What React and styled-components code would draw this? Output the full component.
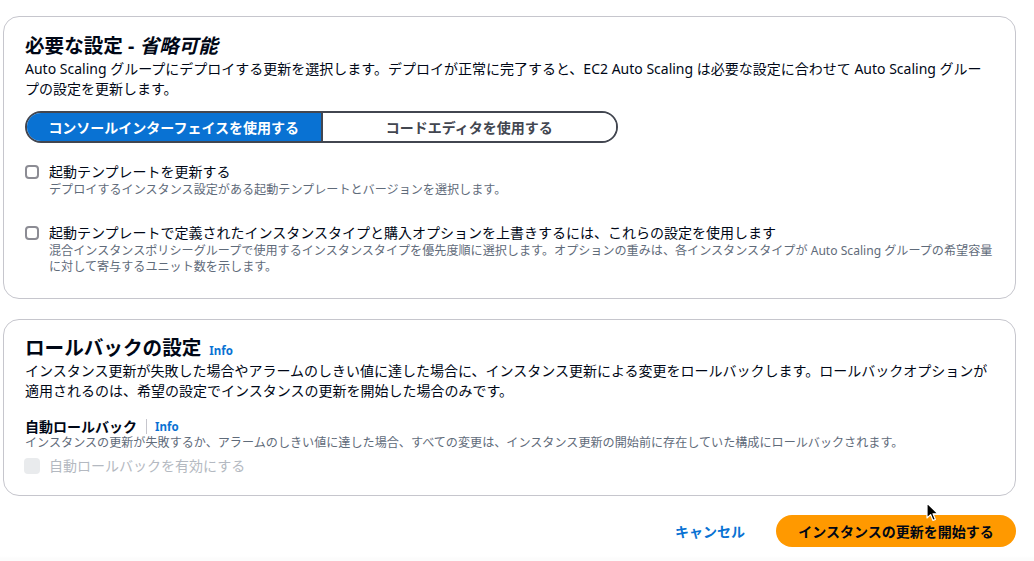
import React, { useState } from 'react';
import styled, { createGlobalStyle } from 'styled-components';

const GlobalStyle = createGlobalStyle`
  html, body {
    margin: 0;
    padding: 0;
    background: #ffffff;
  }
  body {
    font-family: "Noto Sans", "Noto Sans CJK JP", sans-serif;
    color: #000716;
  }
`;

const Page = styled.div`
  position: relative;
  width: 1034px;
  height: 561px;
  box-sizing: border-box;
  padding: 16px 18px 0 3px;
  display: flex;
  flex-direction: column;
  gap: 20px;
  background: linear-gradient(#ffffff 0, #ffffff 556px, #fcfcfc 558px);
`;

const Card = styled.section`
  border: 1px solid #c6c6cd;
  border-radius: 16px;
  background: #ffffff;
  padding: ${({ $pad }) => $pad || '16px 22px 23px 21px'};
  display: flex;
  flex-direction: column;
`;

const Heading = styled.h2`
  margin: 0;
  height: 26px;
  font-size: 19.6px;
  line-height: 26px;
  font-weight: 700;
  display: flex;
  align-items: baseline;
  gap: 8px;

  em {
    font-style: italic;
  }
`;

const Desc = styled.p`
  margin: 0;
  font-size: 14px;
  line-height: 20px;
  color: #000716;
`;

const InfoLink = styled.a`
  color: #0972d3;
  font-size: 11.5px;
  line-height: 1;
  font-weight: 700;
  text-decoration: none;
`;

const Segmented = styled.div`
  margin-top: 12px;
  width: 593px;
  height: 32px;
  box-sizing: border-box;
  border: 2px solid #424650;
  border-radius: 16px;
  overflow: hidden;
  display: flex;
`;

const Segment = styled.button`
  flex: 1;
  border: none;
  margin: 0;
  padding: 0;
  font-family: inherit;
  font-size: 14px;
  font-weight: 700;
  background: ${({ $active }) => ($active ? '#0972d3' : '#ffffff')};
  color: ${({ $active }) => ($active ? '#ffffff' : '#424650')};
  border-right: ${({ $active }) => ($active ? '2px solid #424650' : 'none')};
  cursor: pointer;
`;

const Options = styled.div`
  display: flex;
  flex-direction: column;
  gap: ${({ $gap }) => $gap || '25px'};
  margin-top: ${({ $top }) => $top || '19px'};
`;

const CheckRow = styled.label`
  display: flex;
  gap: 10px;
  align-items: flex-start;
`;

const Box = styled.span`
  flex: none;
  box-sizing: border-box;
  width: ${({ $disabled }) => ($disabled ? '16px' : '14px')};
  height: ${({ $disabled }) => ($disabled ? '16px' : '14px')};
  margin: ${({ $disabled }) => ($disabled ? '2px -1px 0 -1px' : '3px 0 0 0')};
  border: ${({ $disabled }) => ($disabled ? 'none' : '2px solid #8c8c94')};
  background: ${({ $disabled }) => ($disabled ? '#e9ebed' : '#ffffff')};
  border-radius: 4px;
`;

const CheckText = styled.div`
  display: flex;
  flex-direction: column;
`;

const CheckLabel = styled.span`
  font-size: 14px;
  line-height: 20px;
  color: ${({ $disabled }) => ($disabled ? '#b4b9c1' : '#000716')};
`;

const CheckDesc = styled.span`
  font-size: 12.1px;
  line-height: 16px;
  color: #5f6b7a;
`;

const FieldTitle = styled.div`
  margin-top: 17px;
  display: flex;
  align-items: center;
  font-size: 14px;
  line-height: 17px;
  font-weight: 700;
`;

const Divider = styled.span`
  width: 1px;
  height: 15px;
  background: #c6c6cd;
  margin: 0 8px 0 9px;
`;

const Footer = styled.div`
  margin-top: -1px;
  display: flex;
  justify-content: flex-end;
  align-items: center;
  gap: 31px;
`;

const LinkButton = styled.button`
  border: none;
  background: none;
  padding: 0;
  font-family: inherit;
  font-size: 14px;
  font-weight: 700;
  color: #0972d3;
  cursor: pointer;
`;

const PrimaryButton = styled.button`
  width: 240px;
  height: 32px;
  border: none;
  border-radius: 16px;
  background: #ff9900;
  color: #000716;
  font-family: inherit;
  font-size: 14px;
  font-weight: 700;
  cursor: pointer;
`;

const Pointer = styled.svg`
  position: absolute;
  left: 926px;
  top: 502px;
  pointer-events: none;
`;

const Checkbox = ({ label, desc, disabled }) => (
  <CheckRow>
    <Box $disabled={disabled} />
    <CheckText>
      <CheckLabel $disabled={disabled}>{label}</CheckLabel>
      {desc && <CheckDesc>{desc}</CheckDesc>}
    </CheckText>
  </CheckRow>
);

export default function App() {
  const [mode, setMode] = useState('console');

  return (
    <>
      <GlobalStyle />
      <Page>
        <Card>
          <Heading>
            <span>必要な設定 - <em>省略可能</em></span>
          </Heading>
          <Desc>
            Auto Scaling グループにデプロイする更新を選択します。デプロイが正常に完了すると、EC2 Auto Scaling は必要な設定に合わせて Auto Scaling グループの設定を更新します。
          </Desc>
          <Segmented>
            <Segment $active={mode === 'console'} onClick={() => setMode('console')}>
              コンソールインターフェイスを使用する
            </Segment>
            <Segment $active={mode === 'code'} onClick={() => setMode('code')}>
              コードエディタを使用する
            </Segment>
          </Segmented>
          <Options>
            <Checkbox
              label="起動テンプレートを更新する"
              desc="デプロイするインスタンス設定がある起動テンプレートとバージョンを選択します。"
            />
            <Checkbox
              label="起動テンプレートで定義されたインスタンスタイプと購入オプションを上書きするには、これらの設定を使用します"
              desc="混合インスタンスポリシーグループで使用するインスタンスタイプを優先度順に選択します。オプションの重みは、各インスタンスタイプが Auto Scaling グループの希望容量に対して寄与するユニット数を示します。"
            />
          </Options>
        </Card>

        <Card $pad="15px 22px 19px 21px">
          <Heading>
            ロールバックの設定 <InfoLink href="#">Info</InfoLink>
          </Heading>
          <Desc>
            インスタンス更新が失敗した場合やアラームのしきい値に達した場合に、インスタンス更新による変更をロールバックします。ロールバックオプションが適用されるのは、希望の設定でインスタンスの更新を開始した場合のみです。
          </Desc>
          <FieldTitle>
            自動ロールバック
            <Divider />
            <InfoLink href="#">Info</InfoLink>
          </FieldTitle>
          <CheckDesc>
            インスタンスの更新が失敗するか、アラームのしきい値に達した場合、すべての変更は、インスタンス更新の開始前に存在していた構成にロールバックされます。
          </CheckDesc>
          <Options $top="5px">
            <Checkbox label="自動ロールバックを有効にする" disabled />
          </Options>
        </Card>

        <Footer>
          <LinkButton>キャンセル</LinkButton>
          <PrimaryButton>インスタンスの更新を開始する</PrimaryButton>
        </Footer>

        <Pointer width="13" height="20" viewBox="0 0 13 20">
          <path d="M1 1 L1 16 L4.6 12.6 L7 18.4 L9.4 17.4 L7 11.8 L12 11.8 Z" fill="#000" stroke="#fff" strokeWidth="1.2" strokeLinejoin="round" />
        </Pointer>
      </Page>
    </>
  );
}
